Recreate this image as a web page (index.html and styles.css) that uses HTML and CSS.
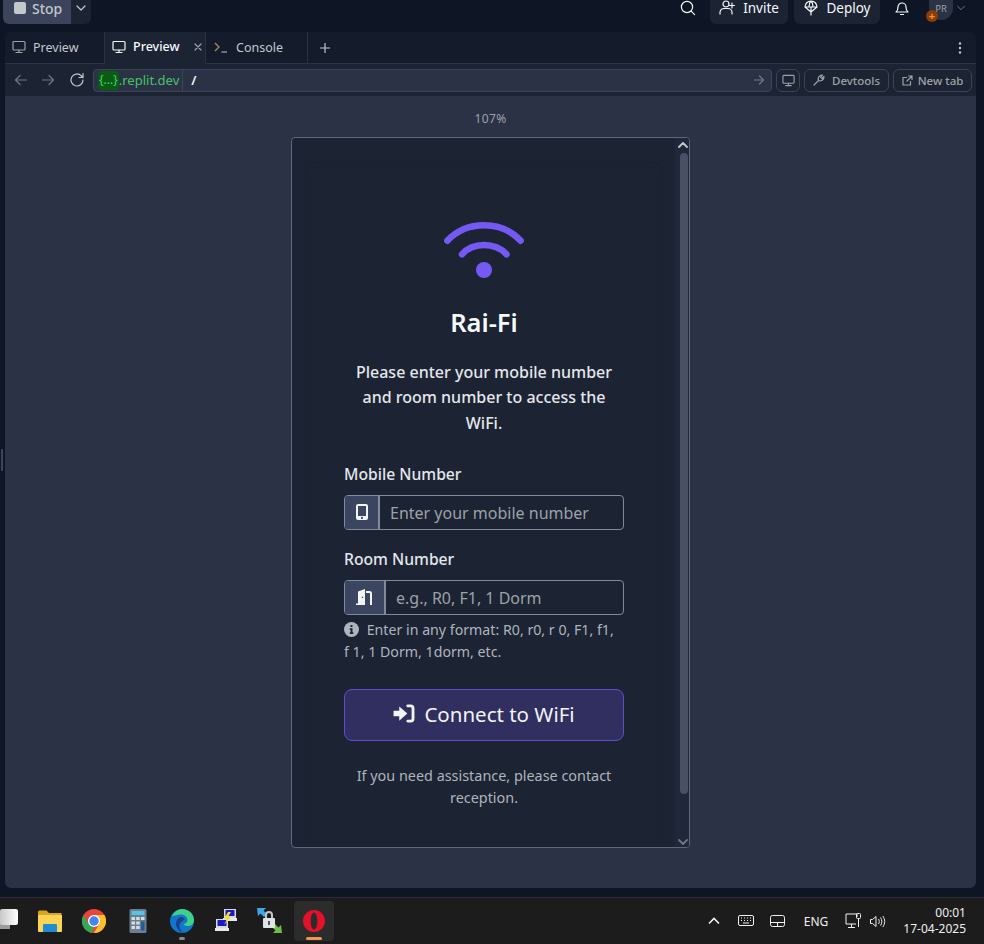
FILE: index.html
```html
<html>
  <head>
    <meta charset="utf-8">
    <title>Rai-Fi</title>
    <link rel="stylesheet" href="styles.css">
  </head>
  <body>
  <header class="topbar">
    <button class="stop"><span class="stop-square"></span>Stop</button>
    <button class="stop-more">
      <svg width="12" height="12" viewBox="0 0 12 12" class="line"><path d="M2 4l4 4 4-4"/></svg>
    </button>
    <svg class="line search" width="16" height="16" viewBox="0 0 16 16"><circle cx="7" cy="7" r="5.6"/><path d="M11.2 11.2L14.6 14.6"/></svg>
    <button class="top-btn invite">
      <svg class="line" width="17" height="16" viewBox="0 0 17 16"><circle cx="7" cy="4" r="3"/><path d="M1 14v-1.500a4 4 0 0 1 4-4h4a4 4 0 0 1 4 4V14M13 3v5M10.500 5.500h5"/></svg>
      Invite
    </button>
    <button class="top-btn deploy">
      <svg class="line" width="16" height="16" viewBox="0 0 16 16"><path d="M2 7a6 6 0 0 1 12 0zM6 7c0-3 1-5 2-6 1 1 2 3 2 6M2 7l6 5 6-5M8 7v8"/></svg>
      Deploy
    </button>
    <svg class="line bell" width="16" height="16" viewBox="0 0 16 16"><path d="M2 12c1.500-1 2-2 2-5a4 4 0 0 1 8 0c0 3 .5 4 2 5zM6.500 14.500h3"/></svg>
    <div class="avatar">PR<span class="avatar-dot">+</span></div>
    <svg class="line avatar-more" width="10" height="10" viewBox="0 0 12 12"><path d="M2 4l4 4 4-4"/></svg>
  </header>

  <div class="workspace">
    <div class="gutter"><span class="handle"></span></div>
    <main class="panel">
      <div class="tabs">
        <div class="tab">
          <svg class="line tab-icon" width="14" height="14" viewBox="0 0 14 14"><rect x="1" y="1.500" width="12" height="8.500" rx="1"/><path d="M7 10v2.500M4 12.500h6"/></svg>
          Preview
        </div>
        <div class="tab tab-active">
          <svg class="line" width="14" height="14" viewBox="0 0 14 14"><rect x="1" y="1.500" width="12" height="8.500" rx="1"/><path d="M7 10v2.500M4 12.500h6"/></svg>
          Preview
          <svg class="line tab-close" width="8" height="8" viewBox="0 0 8 8"><path d="M1 1l6 6M7 1L1 7"/></svg>
        </div>
        <div class="tab tab-console">
          <svg class="console-icon" width="14" height="14" viewBox="0 0 14 14"><path d="M1 3l4 4-4 4" stroke="#a5955a"/><path d="M7.500 12H13" stroke="#c2c8cc"/></svg>
          Console
        </div>
        <svg class="line tab-add" width="10" height="10" viewBox="0 0 10 10"><path d="M5 .5v9M.5 5h9"/></svg>
        <svg class="tab-menu" width="4" height="12" viewBox="0 0 4 12"><circle cx="2" cy="1.500" r="1.200"/><circle cx="2" cy="6" r="1.200"/><circle cx="2" cy="10.500" r="1.200"/></svg>
      </div>

      <div class="urlbar">
        <svg class="line dim" width="14" height="14" viewBox="0 0 14 14"><path d="M12.500 7h-11M6 2.500L1.500 7 6 11.500"/></svg>
        <svg class="line dim" width="14" height="14" viewBox="0 0 14 14"><path d="M1.500 7h11M8 2.500L12.500 7 8 11.500"/></svg>
        <svg class="line" width="16" height="16" viewBox="0 0 16 16"><path d="M14 8a6 6 0 1 1-1.800-4.300L14 5.500M14 1.500v4h-4"/></svg>
        <div class="urlbox">
          <span class="url-badge">{...}</span><span class="url-host">.replit.dev</span>
          <span class="url-path">/</span>
          <svg class="line url-go" width="10" height="10" viewBox="0 0 10 10"><path d="M.5 5h9M5.500 1l4 4-4 4"/></svg>
        </div>
        <button class="url-btn url-icon">
          <svg class="line" width="13" height="13" viewBox="0 0 14 14"><rect x="1" y="1.500" width="12" height="8.500" rx="1"/><path d="M7 10v2.500M4 12.500h6"/></svg>
        </button>
        <button class="url-btn devtools">
          <svg class="line" width="12" height="12" viewBox="0 0 12 12"><path d="M1 11l4.500-4.500C4.500 4 6 .8 9.500 1L7.500 3l1.500 1.500L11 2.500c.2 3.500-3 5-5.500 4"/></svg>
          Devtools
        </button>
        <button class="url-btn newtab">
          <svg class="line" width="11" height="11" viewBox="0 0 11 11"><path d="M8.500 6.500V10H1V2.500h3.500M6.500 1H10v3.500M10 1L5 6"/></svg>
          New tab
        </button>
      </div>

      <div class="view">
        <div class="zoom-label">107%</div>
        <div class="frame">
          <div class="frame-page">
            <section class="card">
              <svg class="wifi" width="80" height="56" viewBox="0 0 80 56">
                <path d="M3.300 18.700C23 -1.900 57 -1.900 76.700 18.700" />
                <path d="M18 32.300C29 20 51 20 62.500 32.300" />
                <circle cx="40" cy="48" r="8"/>
              </svg>
              <h1 class="title">Rai-Fi</h1>
              <p class="lead">Please enter your mobile number and room number to access the WiFi.</p>
              <form>
                <label class="field-label">Mobile Number</label>
                <div class="input-group">
                  <span class="addon addon-mobile">
                    <svg width="12" height="16" viewBox="0 0 12 16"><path fill="#f3f4f6" fill-rule="evenodd" d="M2 0h8a2 2 0 0 1 2 2v12a2 2 0 0 1-2 2H2a2 2 0 0 1-2-2V2a2 2 0 0 1 2-2zm0 2v10h8V2zm4 10.800a1.100 1.100 0 1 0 0 2.200 1.100 1.100 0 0 0 0-2.200z"/></svg>
                  </span>
                  <input class="field" type="text" placeholder="Enter your mobile number">
                </div>
                <label class="field-label room-label">Room Number</label>
                <div class="input-group">
                  <span class="addon addon-room">
                    <svg width="20" height="16" viewBox="0 0 20 16"><path fill="#f3f4f6" d="M1 16v-1.500h2V2.500L10 0v16zM7.500 7.500a.8.8 0 1 0 0 1.600.8.8 0 0 0 0-1.600z"/><path fill="none" stroke="#f3f4f6" stroke-width="2" d="M11 3h3.500a1.500 1.500 0 0 1 1.500 1.500V16"/></svg>
                  </span>
                  <input class="field" type="text" placeholder="e.g., R0, F1, 1 Dorm">
                </div>
                <p class="help">
                  <svg class="help-icon" width="15" height="15" viewBox="0 0 15 15"><circle cx="7.500" cy="7.500" r="7.500" fill="#adb5bd"/><path fill="#1c2333" d="M6.500 3h2v2h-2zM5.800 6.300h2.700v4h.8V12H5.800v-1.700h.8V8h-.8z"/></svg>
                  Enter in any format: R0, r0, r 0, F1, f1, f 1, 1 Dorm, 1dorm, etc.
                </p>
                <button class="connect" type="button">
                  <svg width="22" height="19" viewBox="0 0 22 20"><path fill="#f3f4f6" d="M0 7h6V2.500L14.500 10 6 17.500V13H0z"/><path fill="none" stroke="#f3f4f6" stroke-width="3" stroke-linecap="round" d="M15 2h3a2.500 2.500 0 0 1 2.500 2.500v11A2.500 2.500 0 0 1 18 18h-3"/></svg>
                  Connect to WiFi
                </button>
              </form>
              <p class="assist">If you need assistance, please contact reception.</p>
            </section>
          </div>
          <div class="scrollbar">
            <svg class="line scroll-arrow" width="10" height="6" viewBox="0 0 10 6"><path d="M1 5l4-4 4 4"/></svg>
            <div class="scroll-track"><div class="scroll-thumb"></div></div>
            <svg class="line scroll-arrow dim" width="10" height="6" viewBox="0 0 10 6"><path d="M1 1l4 4 4-4"/></svg>
          </div>
        </div>
      </div>
    </main>
  </div>

  <footer class="taskbar">
    <div class="start"><span class="start-a"></span><span class="start-b"></span></div>
    <div class="task-icons">
      <span class="task-icon">
        <svg width="26" height="24" viewBox="0 0 26 24"><path fill="#d9a520" d="M1 3a1.500 1.500 0 0 1 1.500-1.500h7L12 4h12.500v4H1z"/><path fill="#fcd453" d="M1 6h24v16a1 1 0 0 1-1 1H2a1 1 0 0 1-1-1z"/><path fill="#1f8ad6" d="M7 15h12a1 1 0 0 1 1 1v7H6v-7a1 1 0 0 1 1-1z"/></svg>
      </span>
      <span class="task-icon">
        <svg width="24" height="24" viewBox="0 0 24 24"><circle cx="12" cy="12" r="12" fill="#e8453c"/><path fill="#34a853" d="M1.600 6l5.200 9 5.200 3-2 6A12 12 0 0 1 1.600 6z"/><path fill="#fbc02d" d="M12 6h10.400A12 12 0 0 1 12 24l5.200-9z"/><circle cx="12" cy="12" r="6" fill="#fff"/><circle cx="12" cy="12" r="4.700" fill="#4285f4"/></svg>
      </span>
      <span class="task-icon">
        <svg width="18" height="24" viewBox="0 0 18 24"><rect x=".5" width="17" height="24" rx="1.500" fill="#6d7f8e"/><rect x="2.500" y="2" width="13" height="4" fill="#57c4e4"/><g fill="#d5dde3"><rect x="2.500" y="8" width="3.500" height="3"/><rect x="7.200" y="8" width="3.500" height="3"/><rect x="12" y="8" width="3.500" height="3"/><rect x="2.500" y="12.500" width="3.500" height="3"/><rect x="7.200" y="12.500" width="3.500" height="3"/><rect x="2.500" y="17" width="3.500" height="3"/><rect x="7.200" y="17" width="3.500" height="3"/></g><rect x="12" y="12.500" width="3.500" height="9" fill="#1f5c9c"/></svg>
      </span>
      <span class="task-icon has-dot">
        <svg width="24" height="24" viewBox="0 0 24 24"><circle cx="12" cy="12" r="12" fill="#1177c9"/><path fill="#3fd08a" d="M2 7C5 1 10 0 12 0c7 0 12 5 12 11 0 4-3 6-6.500 6-2 0-3.500-.8-4-2 3-.5 4-2 4-4 0-3-3-5.500-6.500-5.500S4 7 2 7z"/><path fill="#1b3f8f" d="M12 8c-4 0-6 3-6 7 0 3 2.500 8 8 8.800-4-2-5.500-6-4-9 .8-1.800 2.500-3 4.500-4C14 9.500 13 8 12 8z"/></svg>
        <i class="task-dot"></i>
      </span>
      <span class="task-icon">
        <svg width="24" height="24" viewBox="0 0 24 24"><rect x="10" y="0" width="12" height="9" fill="#d8dce0"/><rect x="11.500" y="1" width="9" height="6" fill="#1a1ac0"/><rect x="9" y="9" width="14" height="3" fill="#e6e8ea"/><rect x="2" y="10" width="12" height="9" fill="#d8dce0"/><rect x="3.500" y="11" width="9" height="6" fill="#1a1ac0"/><rect x="1" y="19" width="14" height="3" fill="#e6e8ea"/><path fill="#f5e020" d="M14 3l-4 7h3l-3 6 7-8h-3l3-5z"/></svg>
      </span>
      <span class="task-icon">
        <svg width="26" height="26" viewBox="0 0 26 26"><path fill="#3aa7e8" d="M0 0h9L6.500 2.500 10 6l-3 3-3.500-3.500L1 8z"/><path fill="#6cc04a" d="M25 25h-9l2.500-2.500L15 19l3-3 3.500 3.500L24 17z"/><rect x="6" y="10" width="12" height="10" rx="1" fill="#dfe3e6"/><path fill="none" stroke="#bfc5ca" stroke-width="2" d="M9 10V7a3 3 0 0 1 6 0v3"/><rect x="11" y="13" width="2" height="4" fill="#555"/></svg>
      </span>
      <span class="task-icon task-active">
        <svg width="24" height="24" viewBox="0 0 24 24"><path fill="#e3112a" fill-rule="evenodd" d="M12 1c6 0 11 4.900 11 11s-5 11-11 11S1 18.100 1 12 6 1 12 1zm0 2.500c-2 0-3.300 3.800-3.300 8.500s1.300 8.500 3.300 8.500 3.300-3.800 3.300-8.500-1.300-8.500-3.300-8.500z"/></svg>
        <i class="task-bar"></i>
      </span>
    </div>
    <div class="tray">
      <svg class="tray-line chev" width="12" height="8" viewBox="0 0 12 8"><path d="M1 6.500l5-5 5 5"/></svg>
      <svg class="tray-line" width="16" height="12" viewBox="0 0 16 12"><rect x=".5" y=".5" width="15" height="10" rx="1.500"/><path d="M3 3h1M6 3h1M9 3h1M12 3h1M3 5.500h1M6 5.500h1M9 5.500h1M12 5.500h1M5 8h6"/></svg>
      <svg class="tray-line pad" width="15" height="12" viewBox="0 0 15 12"><rect x=".5" y=".5" width="14" height="11" rx="2"/><path d="M.5 7.500h14M7.500 7.500v4"/></svg>
      <span class="tray-lang">ENG</span>
      <svg class="tray-line net" width="17" height="17" viewBox="0 0 17 17"><path d="M12 4V1H1v10h10M3 14.500h7M6.500 11v3.500"/><rect x="11.500" y=".5" width="4" height="5" rx="1"/><path d="M13.500 5.500V14"/></svg>
      <svg class="tray-line vol" width="16" height="13" viewBox="0 0 16 13"><path d="M.5 4.500h2L6 1.500v10l-3.500-3h-2zM8.500 4c1 1.500 1 3.500 0 5M10.500 2.500c1.800 2.500 1.800 5.500 0 8M12.800 1c2.500 3.500 2.500 7.500 0 11"/></svg>
      <div class="clock"><span>00:01</span><span>17-04-2025</span></div>
    </div>
  </footer>
  </body>
</html>
```

FILE: styles.css
```css
* {
  box-sizing: border-box;
}
html, body {
  height: 100%;
}
body {
  display: flex;
  flex-direction: column;
  margin: 0;
  height: 944px;
  overflow: hidden;
  background: #0e1525;
  color: #f5f9fc;
  font-family: "Noto Sans", "Liberation Sans", sans-serif;
}
button {
  font-family: inherit;
  border: 0;
  color: inherit;
}
svg {
  display: block;
  flex: none;
}
.line {
  fill: none;
  stroke: currentColor;
  stroke-width: 1.2;
  stroke-linecap: round;
  stroke-linejoin: round;
}
.dim {
  color: #6f7785;
}

/* top bar, cut off by the capture */
.topbar {
  display: flex;
  align-items: flex-start;
  height: 32px;
  flex: none;
  padding-left: 3px;
}
.stop {
  display: flex;
  align-items: center;
  gap: 6px;
  width: 68px;
  height: 24px;
  padding: 0 0 8px 11px;
  background: #3c445c;
  border-radius: 0 0 0 6px;
  color: #c2c8cc;
  font-size: 14px;
  font-weight: 500;
}
.stop-square {
  width: 12px;
  height: 12px;
  border-radius: 2px;
  background: #c2c8cc;
}
.stop-more {
  display: flex;
  justify-content: center;
  width: 20px;
  height: 24px;
  padding: 2px 0 0;
  background: #1c2333;
  border-radius: 0 0 6px 0;
  color: #c2c8cc;
}
.search {
  margin: 0 0 0 589px;
}
.top-btn {
  display: flex;
  align-items: center;
  justify-content: center;
  gap: 7px;
  height: 24px;
  padding: 0 0 8px;
  background: #1c2333;
  border-radius: 0 0 6px 6px;
  font-size: 13.500px;
}
.invite {
  width: 78px;
  margin-left: 14px;
}
.deploy {
  width: 86px;
  margin-left: 6px;
}
.bell {
  margin-left: 14px;
}
.avatar {
  position: relative;
  display: flex;
  align-items: center;
  justify-content: center;
  width: 24px;
  height: 20px;
  margin: 0 0 0 19px;
  padding-bottom: 3px;
  border-radius: 0 0 12px 12px;
  background: #2b3245;
  color: #9da2a6;
  font-size: 9.500px;
}
.avatar-dot {
  position: absolute;
  left: -3px;
  top: 10px;
  width: 12px;
  height: 12px;
  border-radius: 50%;
  background: #8a3f06;
  color: #ff8a3c;
  font-size: 11px;
  font-weight: 700;
  line-height: 11px;
  text-align: center;
}
.avatar-more {
  margin: 3px 0 0 3px;
  color: #6f7785;
}

.workspace {
  display: flex;
  height: 856px;
  flex: none;
}
.gutter {
  display: flex;
  align-items: center;
  width: 5px;
  padding-left: 1px;
}
.handle {
  width: 2px;
  height: 22px;
  background: #3c445c;
}
.panel {
  display: flex;
  flex-direction: column;
  width: 971px;
  border-radius: 6px;
  overflow: hidden;
}

/* tabs */
.tabs {
  display: flex;
  align-items: center;
  height: 32px;
  flex: none;
  background: #141b2b;
  border-bottom: 1px solid #2b3245;
  color: #c2c8cc;
  font-size: 12.500px;
}
.tab {
  display: flex;
  align-items: center;
  gap: 7px;
  width: 100px;
  height: 32px;
  padding: 0 0 1px 7px;
  border-right: 1px solid #2b3245;
}
.tab-icon {
  color: #9da2a6;
}
.tab-active {
  width: 101px;
  background: #1c2333;
  color: #f5f9fc;
  border-bottom: 1px solid #1c2333;
  font-weight: 500;
}
.tab-close {
  margin-left: 7px;
  color: #9da2a6;
}
.tab-console {
  width: 102px;
  padding-left: 8px;
  gap: 8px;
}
.console-icon {
  fill: none;
  stroke-width: 1.200;
}
.tab-add {
  margin-left: 12px;
}
.tab-menu {
  margin-left: auto;
  margin-right: 14px;
  fill: #c2c8cc;
}

/* url bar */
.urlbar {
  display: flex;
  align-items: center;
  height: 32px;
  flex: none;
  padding-left: 9px;
  background: #1c2333;
  color: #c2c8cc;
}
.urlbar > svg:nth-child(2) {
  margin-left: 13px;
}
.urlbar > svg:nth-child(3) {
  margin-left: 14px;
}
.urlbox {
  display: flex;
  align-items: center;
  width: 679px;
  height: 23px;
  margin-left: 8px;
  padding-left: 4px;
  background: #2b3245;
  border: 1px solid #3c445c;
  border-radius: 4px;
  font-size: 12px;
}
.url-badge {
  padding: 0 1px;
  height: 19px;
  line-height: 18px;
  background: #0a5c14;
  border-radius: 4px;
  color: #46d16a;
}
.url-host {
  padding-right: 3px;
  height: 21px;
  font-size: 13px;
  line-height: 20px;
  color: #46c36a;
  border-right: 1px solid #3c445c;
}
.url-path {
  margin-left: 8px;
  color: #f5f9fc;
  font-size: 13px;
  font-weight: 600;
}
.url-go {
  margin-left: auto;
  margin-right: 7px;
  color: #6f7785;
}
.url-btn {
  display: flex;
  align-items: center;
  justify-content: center;
  gap: 7px;
  height: 23px;
  margin-left: 4px;
  padding: 0;
  background: transparent;
  border: 1px solid #3c445c;
  border-radius: 6px;
  color: #9da2a6;
  font-size: 11.500px;
  font-weight: 500;
}
.url-icon {
  width: 24px;
}
.devtools {
  width: 85px;
}
.newtab {
  width: 79px;
  gap: 5px;
}

/* preview */
.view {
  display: flex;
  flex: 1;
  flex-direction: column;
  align-items: center;
  background: #2b3245;
}
.zoom-label {
  height: 41px;
  padding-top: 14px;
  color: #9da2a6;
  font-size: 12px;
  letter-spacing: .4px;
}
.frame {
  display: flex;
  width: 399px;
  height: 711px;
  background: #1c2333;
  border: 1px solid #5f6779;
  border-radius: 4px;
  overflow: hidden;
}
.frame-page {
  flex: 1;
  min-width: 0;
  padding: 25px 13px 0 14px;
  overflow: hidden;
}
.card {
  display: flex;
  flex-direction: column;
  height: 700px;
  padding: 59px 38px 0;
  background: #1c2333;
  box-shadow: 0 0 0 1px #1b2131;
  border-radius: 8px;
}
.wifi {
  align-self: center;
  fill: #7559f5;
  stroke: none;
}
.wifi path {
  fill: none;
  stroke: #7559f5;
  stroke-width: 6.500;
  stroke-linecap: round;
}
.title {
  margin: 28px 0 0;
  font-size: 25.500px;
  font-weight: 600;
  line-height: 32px;
  text-align: center;
}
.lead {
  margin: 21.500px 0 0;
  padding: 0 4px;
  color: #e4e7ec;
  font-size: 16px;
  font-weight: 500;
  line-height: 25.500px;
  text-align: center;
}
form {
  margin: 0;
}
.field-label {
  display: block;
  margin-top: 25.500px;
  color: #e4e7ec;
  font-size: 15.700px;
  font-weight: 500;
  line-height: 24px;
}
.room-label {
  margin-top: 17px;
}
.input-group {
  display: flex;
  height: 35px;
  margin-top: 9px;
  border: 1px solid #828a9a;
  border-radius: 4px;
  overflow: hidden;
}
.addon {
  display: flex;
  align-items: center;
  justify-content: center;
  flex: none;
  background: #3c4560;
  border-right: 2px solid #828a9a;
}
.addon-mobile {
  width: 35px;
}
.addon-room {
  width: 41px;
}
.field {
  flex: 1;
  min-width: 0;
  padding: 1px 10px 0;
  background: transparent;
  border: 0;
  outline: 0;
  color: #e4e7ec;
  font-family: inherit;
  font-size: 16px;
}
.field::placeholder {
  color: #9da2a6;
  opacity: 1;
}
.help {
  margin: 4px 0 0;
  padding-right: 3px;
  color: #adb5bd;
  font-size: 14.200px;
  line-height: 22px;
}
.help-icon {
  display: inline-block;
  margin-right: 4px;
  vertical-align: -2px;
}
.connect {
  display: flex;
  align-items: center;
  justify-content: center;
  gap: 9px;
  width: 100%;
  height: 52px;
  margin-top: 26px;
  padding-bottom: 3px;
  background: #302f60;
  border: 1px solid #5b4fd0;
  border-radius: 8px;
  color: #f3f4f6;
  font-size: 20.500px;
}
.assist {
  margin: 24px 0 0;
  color: #adb5bd;
  font-size: 14.400px;
  line-height: 22px;
  text-align: center;
}
.scrollbar {
  display: flex;
  flex-direction: column;
  align-items: flex-end;
  justify-content: space-between;
  width: 14px;
  flex: none;
  padding: 4px 1px 2px 0;
  background: #20273a;
  color: #c2c8cc;
}
.scroll-arrow {
  stroke-width: 1.800;
}
.scroll-track {
  flex: 1;
  width: 8px;
  padding-top: 5px;
}
.scroll-thumb {
  height: 641px;
  background: #4a4f66;
  border-radius: 4px;
}

/* windows taskbar */
.taskbar {
  display: flex;
  align-items: center;
  height: 47px;
  flex: none;
  margin-top: 9px;
  background: #1c1c1c;
  border-top: 1px solid #2e2e2e;
}
.start {
  position: relative;
  width: 18px;
  height: 24px;
  overflow: hidden;
}
.start-a {
  position: absolute;
  left: 0;
  top: 4px;
  width: 10px;
  height: 16px;
  background: #9c9c9c;
}
.start-b {
  position: absolute;
  left: 0;
  top: 0;
  width: 18px;
  height: 16px;
  background: linear-gradient(90deg, #c8c8c8, #fff);
  border-radius: 2px;
}
.task-icons {
  display: flex;
  margin-left: 12px;
  gap: 4px;
}
.task-icon {
  position: relative;
  display: flex;
  align-items: center;
  justify-content: center;
  width: 40px;
  height: 40px;
  border-radius: 4px;
}
.task-active {
  background: #2c2c2c;
}
.task-dot {
  position: absolute;
  left: 17px;
  bottom: 1px;
  width: 6px;
  height: 3px;
  border-radius: 2px;
  background: #8a8a8a;
}
.task-bar {
  position: absolute;
  left: 12px;
  bottom: 1px;
  width: 16px;
  height: 3px;
  border-radius: 2px;
  background: #f0974a;
}
.tray {
  display: flex;
  align-items: center;
  margin-left: auto;
  color: #f0f0f0;
}
.tray-line {
  fill: none;
  stroke: #f0f0f0;
  stroke-width: 1;
}
.chev {
  stroke-width: 1.600;
  margin-right: 18px;
}
.pad {
  margin-left: 16px;
}
.tray-lang {
  margin-left: 19px;
  font-size: 12px;
}
.net {
  margin-left: 17px;
}
.vol {
  margin-left: 8px;
}
.clock {
  display: flex;
  flex-direction: column;
  align-items: flex-end;
  margin: 0 18px 0 17px;
  font-size: 12px;
  line-height: 16px;
}
```
